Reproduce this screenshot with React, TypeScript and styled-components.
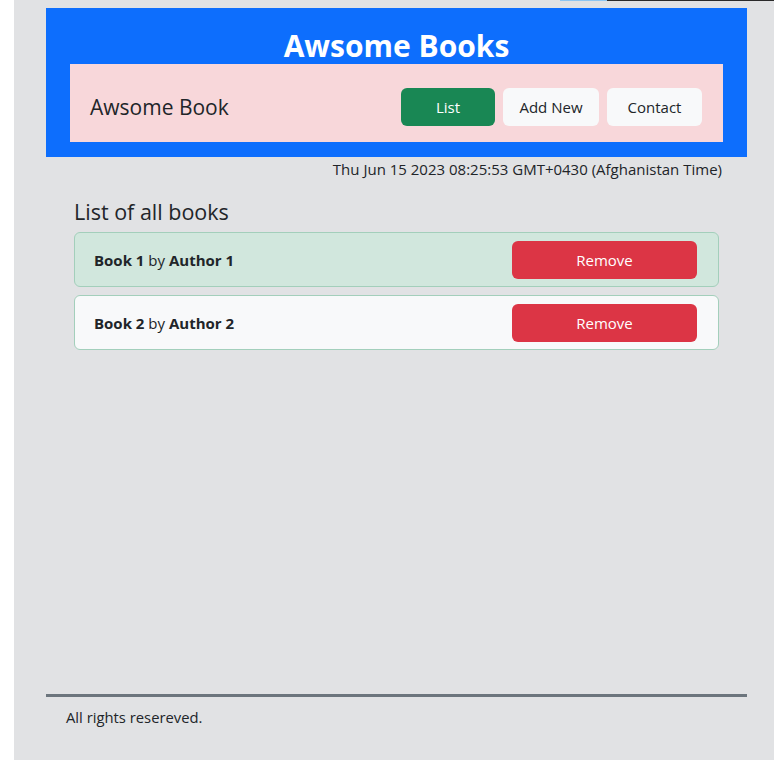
import React from "react";
import styled, { createGlobalStyle } from "styled-components";

const Global = createGlobalStyle`
  html, body { margin: 0; padding: 0; background: #ffffff; }
  body { font-family: "Open Sans", "Noto Sans", sans-serif; color: #212529; }
  * { box-sizing: border-box; }
`;

const TopStrip = styled.div`
  position: absolute;
  top: 0;
  left: 560px;
  width: 214px;
  height: 1px;
  display: flex;
`;

const StripPart = styled.div<{ $c: string; $w: number }>`
  height: 1px;
  width: ${(p) => p.$w}px;
  background: ${(p) => p.$c};
`;

const Panel = styled.div`
  margin-left: 14px;
  width: 760px;
  height: 760px;
  background: #e1e2e4;
  padding: 8px 27px 0 32px;
  display: flex;
  flex-direction: column;
`;

const Header = styled.header`
  background: #0d6efd;
  height: 149px;
  padding: 0 24px;
  display: flex;
  flex-direction: column;
  align-items: stretch;
`;

const Title = styled.h1`
  margin: 0;
  height: 56px;
  display: flex;
  align-items: flex-end;
  justify-content: center;
  font-size: 30px;
  font-weight: 700;
  color: #ffffff;
  line-height: 1;
  padding-bottom: 3px;
`;

const Nav = styled.nav`
  background: #f8d7da;
  height: 78px;
  display: flex;
  align-items: center;
  justify-content: space-between;
  padding: 8px 21px 0 20px;
`;

const Brand = styled.span`
  font-size: 21px;
  color: #212529;
  font-weight: 400;
`;

const NavList = styled.div`
  display: flex;
  gap: 8px;
`;

const NavButton = styled.button<{ $active?: boolean; $w: number }>`
  width: ${(p) => p.$w}px;
  height: 38px;
  border: none;
  border-radius: 6px;
  font-family: inherit;
  font-size: 15px;
  background: ${(p) => (p.$active ? "#198754" : "#f8f9fa")};
  color: ${(p) => (p.$active ? "#ffffff" : "#212529")};
  cursor: pointer;
`;

const DateLine = styled.div`
  text-align: right;
  padding-right: 25px;
  margin-top: 2px;
  font-size: 15px;
  line-height: 20px;
`;

const Section = styled.section`
  padding: 0 28px;
  margin-top: 20px;
`;

const SectionTitle = styled.h2`
  margin: 0 0 8px;
  font-size: 21.5px;
  font-weight: 500;
  line-height: 25px;
`;

const BookList = styled.ul`
  list-style: none;
  margin: 0;
  padding: 0;
  display: flex;
  flex-direction: column;
  gap: 8px;
`;

const BookRow = styled.li<{ $alt?: boolean }>`
  height: 55px;
  width: 645px;
  border: 1px solid #a3cfbb;
  border-radius: 6px;
  background: ${(p) => (p.$alt ? "#f8f9fa" : "#d1e7dd")};
  display: flex;
  align-items: center;
  justify-content: space-between;
  padding: 0 21px 0 19px;
  font-size: 15px;
`;

const Strong = styled.b`
  font-weight: 700;
`;

const RemoveButton = styled.button`
  width: 185px;
  height: 38px;
  border: none;
  border-radius: 6px;
  background: #dc3545;
  color: #ffffff;
  font-family: inherit;
  font-size: 15px;
  cursor: pointer;
`;

const Footer = styled.footer`
  margin-top: auto;
  margin-bottom: 33px;
`;

const Rule = styled.hr`
  margin: 0;
  border: none;
  height: 3px;
  background: #6c757d;
`;

const FooterText = styled.p`
  margin: 10px 0 0 20px;
  font-size: 14.8px;
  line-height: 20px;
`;

const books = [
  { title: "Book 1", author: "Author 1" },
  { title: "Book 2", author: "Author 2" },
];

export default function App() {
  return (
    <>
      <Global />
      <TopStrip>
        <StripPart $c="#8ec5f0" $w={47} />
        <StripPart $c="#2a2a2a" $w={167} />
      </TopStrip>
      <Panel>
        <Header>
          <Title>Awsome Books</Title>
          <Nav>
            <Brand>Awsome Book</Brand>
            <NavList>
              <NavButton $active $w={94}>List</NavButton>
              <NavButton $w={96}>Add New</NavButton>
              <NavButton $w={95}>Contact</NavButton>
            </NavList>
          </Nav>
        </Header>
        <DateLine>Thu Jun 15 2023 08:25:53 GMT+0430 (Afghanistan Time)</DateLine>
        <Section>
          <SectionTitle>List of all books</SectionTitle>
          <BookList>
            {books.map((b, i) => (
              <BookRow key={b.title} $alt={i % 2 === 1}>
                <span>
                  <Strong>{b.title}</Strong> by <Strong>{b.author}</Strong>
                </span>
                <RemoveButton>Remove</RemoveButton>
              </BookRow>
            ))}
          </BookList>
        </Section>
        <Footer>
          <Rule />
          <FooterText>All rights resereved.</FooterText>
        </Footer>
      </Panel>
    </>
  );
}
